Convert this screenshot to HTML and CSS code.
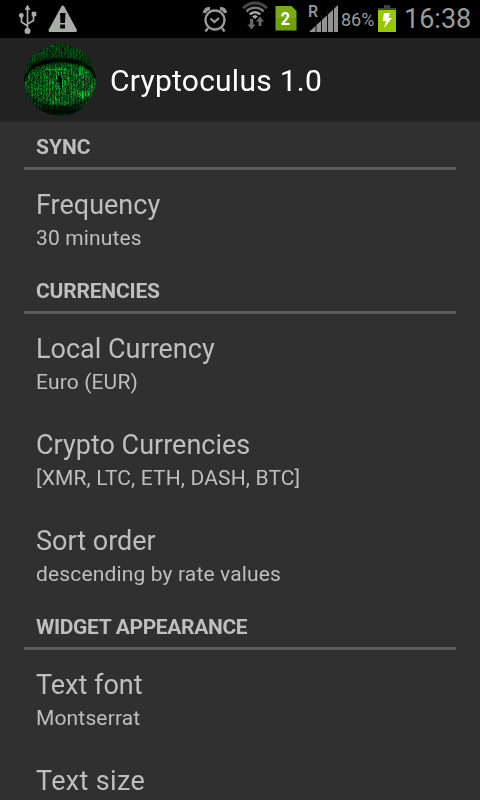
FILE: index.html
```html
<!DOCTYPE html>
<html lang="en">
<head>
<meta charset="utf-8">
<title>Cryptoculus</title>
<link rel="stylesheet" href="styles.css">
</head>
<body>
<header class="status">
  <svg class="status-icons" width="480" height="38" viewBox="0 0 480 38">
    <g fill="#aaaca9" stroke="#aaaca9">
      <path d="M27.500 9V31M27.500 26L21.500 22V16M27.500 24L33.500 20.500V15" fill="none" stroke-width="1.700"/>
      <path d="M27.500 5L30 9.500H25ZM32 12H36V16H32Z" stroke-width=".6"/>
      <circle cx="21.300" cy="15.500" r="2.400" stroke="none"/>
      <circle cx="27.500" cy="31" r="3" stroke="none"/>
      <path d="M62.800 7L75.500 30.500H50Z" stroke-width="3" stroke-linejoin="round"/>
    </g>
    <path d="M60 13H65.500L65 23H60.500ZM60.200 24.500H65V28.500H60.200Z" fill="#050505"/>
    <g fill="none" stroke="#999b99" stroke-width="2.300">
      <circle cx="215" cy="20" r="9.500"/>
      <path d="M210.500 18.500L214.500 22L219 18M208 28L205.500 31.500M222 28L224.500 31.500"/>
      <path d="M204.500 13Q205 9 210 8.500M225.500 13Q225 9 220 8.500" stroke-width="3.500"/>
    </g>
    <g fill="none">
      <path d="M243.100 8.300A16 16 0 0 1 266.900 8.300" stroke="#484848" stroke-width="3"/>
      <path d="M246.500 11.500A11.500 11.500 0 0 1 263.500 11.500" stroke="#7a7a7a" stroke-width="2.700"/>
      <path d="M249.800 14.500A7 7 0 0 1 260.200 14.500" stroke="#aaa" stroke-width="2.500"/>
    </g>
    <path d="M252 16.500Q255 13.500 258 16.500L255 19Z" fill="#aaa"/>
    <path d="M250 19H253.200V24.500H255.500L251.500 29.500L247.500 24.500H250ZM258.500 26V21.500H256L260 16.500L264 21.500H261.500V26Z" fill="#686868"/>
    <path d="M276 6H291.500L296.500 11V30.500H275.500V6.500Z" fill="#7caa12"/>
    <path d="M276 18H296V30H276Z" fill="#6f9f0c"/>
    <path d="M309 32L338 5V32Z" fill="#929292"/>
    <path d="M316 20V33M321.500 15V33M327.500 10V33M333.500 5V33" stroke="#111" stroke-width="1"/>
    <path d="M384 5H390V8H396V11H378V8H384Z" fill="#424242"/>
    <path d="M378 10H396V32H378Z" fill="#96c900"/>
    <path d="M384 13H390L388.500 18H392L384 28L386 21H382.500Z" fill="#fff"/>
  </svg>
  <span class="sim">2</span>
  <span class="roaming">R</span>
  <span class="percent">86%</span>
  <time class="clock">16:38</time>
</header>
<div class="actionbar">
  <canvas class="logo" id="logo" width="72" height="72"></canvas>
  <h1>Cryptoculus 1.0</h1>
</div>
<main>
  <h2>SYNC</h2>
  <section class="item"><h3>Frequency</h3><p>30 minutes</p></section>
  <h2 class="tight">CURRENCIES</h2>
  <section class="item"><h3>Local Currency</h3><p>Euro (EUR)</p></section>
  <section class="item"><h3>Crypto Currencies</h3><p>[XMR, LTC, ETH, DASH, BTC]</p></section>
  <section class="item"><h3>Sort order</h3><p>descending by rate values</p></section>
  <h2 class="tighter">WIDGET APPEARANCE</h2>
  <section class="item"><h3>Text font</h3><p>Montserrat</p></section>
  <section class="item last"><h3>Text size</h3></section>
</main>
<script src="logo.js"></script>
</body>
</html>
```
FILE: styles.css
```css
* { box-sizing: border-box; margin: 0; }
body {
  height: 800px;
  overflow: hidden;
  background: #303030;
  color: #bebebe;
  font-family: Roboto, sans-serif;
}
.status { position: relative; height: 38px; background: #000; color: #999b99; }
.status-icons { display: block; }
.status span, .clock { position: absolute; white-space: nowrap; line-height: 1; }
.status .sim { left: 280px; top: 9px; font-size: 19px; font-weight: 700; color: #fff; transform: scaleX(0.85); }
.status .roaming { left: 308px; top: 4px; font-size: 16px; font-weight: 500; }
.status .percent { left: 341px; top: 11px; font-size: 18px; }
.clock { left: 404px; top: 6px; font-size: 27px; }
.actionbar {
  display: flex;
  align-items: center;
  gap: 14px;
  height: 84px;
  padding-left: 24px;
  background: #222;
}
.logo { width: 72px; height: 72px; border-radius: 50%; }
h1 { padding-top: 2px; color: #fff; font-size: 30px; font-weight: 400; line-height: 36px; letter-spacing: 0.25px; }
main { padding: 0 24px; }
h2 {
  height: 48px;
  padding: 9px 12px 0;
  border-bottom: 3px solid #5a5a5a;
  font-size: 21px;
  font-weight: 700;
  line-height: 32px;
}
.tight { letter-spacing: -0.2px; }
.tighter { letter-spacing: -0.35px; }
.item { height: 96px; padding: 18px 12px 0; }
.last { height: 54px; letter-spacing: 0.35px; }
h3 { font-size: 27px; font-weight: 400; line-height: 34px; }
p { font-size: 21px; line-height: 32px; letter-spacing: 0.15px; }
```
FILE: logo.js
```js
// Eye of green terminal noise, drawn pixel by pixel from a fixed seed.
const ctx = document.getElementById("logo").getContext("2d");
let seed = 41;
const rand = () => (seed = (seed * 16807) % 2147483647) / 2147483647;
const bell = (d, w) => Math.exp(-(d * d) / (w * w));
for (let x = 0; x < 72; x++) {
  const column = x % 3 === 0 ? 0.65 : 1;
  let streak = rand();
  for (let y = 0; y < 72; y++) {
    const t = (x - 36) / 36;
    const top = 16 + 9 * t * t + 10 * Math.pow(Math.abs(t), 8);
    const bottom = 62 - 18 * Math.pow(Math.abs(t), 3);
    let v = y > top + 2 && y < bottom ? 0.36 : 0.24;
    v *= 1 - 0.97 * bell(y - top, 3);
    v *= 1 - 0.4 * bell(y - bottom, 2);
    v *= 1 - 0.8 * bell(y - 67, 5);
    v += 0.15 * bell(x - 36, 6) * bell(y - 36, 15);
    v += 0.28 * bell(x - 60, 9) * bell(y - 50, 3.5);
    v += 0.18 * bell(x - 58, 5) * bell(y - 26, 8);
    streak = 0.35 * streak + 0.65 * rand();
    v *= column * (0.15 + 1.7 * streak);
    if (y === 25 && x > 20 && x < 43) v = 0.6;
    const slit = 2 - Math.abs(y - 36) / 5.5;
    if (Math.abs(x - 35 - (y - 30) / 9) < slit) v *= 0.08;
    const g = Math.round(255 * Math.min(v, 0.9));
    ctx.fillStyle = `rgb(${Math.round(g * 0.1)},${g},${Math.round(g * 0.27)})`;
    ctx.fillRect(x, y, 1, 1);
  }
}
```
